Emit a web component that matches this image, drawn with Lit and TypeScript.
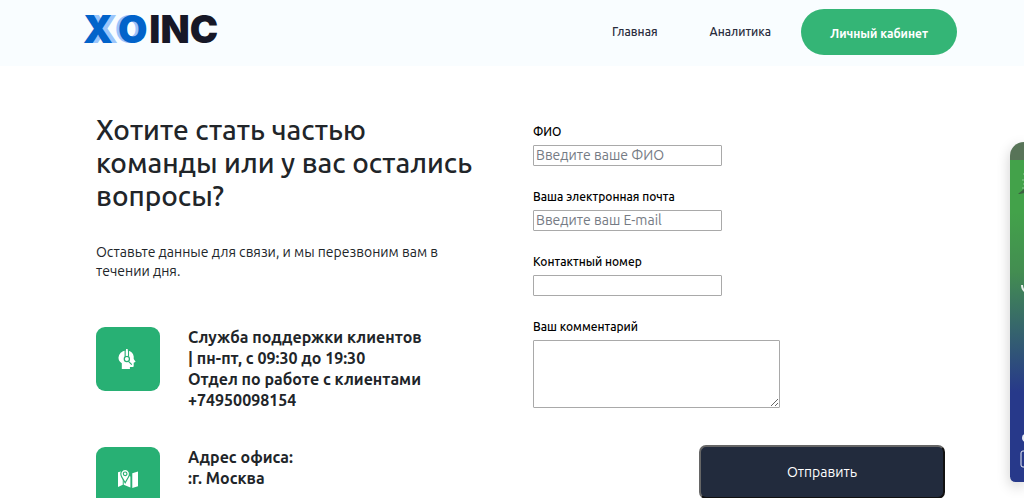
import { LitElement, html, css, svg } from "lit";
import { customElement } from "lit/decorators.js";

const supportIcon = svg`
  <path fill="#fff" d="M4 21v-6C1.500 13.500 .5 11.500 .5 9A8 8 0 0 1 8 1.500h2A7.500 7.500 0 0 1 16.500 8v2.500l2 3-2 1v3c0 1-.5 1.500-1.500 1.500h-2.500V21z"/>
  <path fill="none" stroke="#28b074" stroke-width="1.200" d="M7.500 0v8M11 0v8M11 13l3.500 3.500"/>
  <circle cx="9.300" cy="10.500" r="2.700" fill="#fff" stroke="#28b074" stroke-width="1.300"/>
  <path fill="none" stroke="#fff" stroke-width="1.800" d="M9.300 0v7"/>`;

const mapIcon = svg`
  <path fill="#fff" d="M0 3.500 5 2v14.500L0 19zM6 5l7 3v11.500L6 16.500zM15 4.500l6.500-2v15.500L15 20z"/>
  <path fill="#fff" stroke="#28b074" stroke-width="1.200" d="M7.500 14.500 4 8.500C1.500 4 4 .5 7.500 .5S13.500 4 11 8.500z"/>
  <circle cx="7.500" cy="5" r="1.900" fill="none" stroke="#28b074" stroke-width="1.200"/>`;

@customElement("app-root")
export class AppRoot extends LitElement {
  static styles = css`
    :host {
      display: block;
      background: #fff;
      color: #212529;
      font-family: Ubuntu, "Noto Sans", sans-serif;
      font-size: 14px;
      line-height: 20px;
    }
    * { box-sizing: border-box; }
    .header {
      display: flex;
      justify-content: space-between;
      align-items: flex-start;
      height: 66px;
      padding: 9px 67px 0 83px;
      background: #f9fdff;
    }
    .logo {
      display: flex;
      font: 900 38px/40px Inter, "Liberation Sans", sans-serif;
      color: #171827;
      text-decoration: none;
    }
    .logo-x { color: #0263ca; text-shadow: 5px 0 #9cc5fb; }
    .logo-o { color: #0263ca; text-shadow: -3px 0 #9cc5fb; padding: 0 2px 0 5px; }
    .nav { display: flex; align-items: center; }
    .link {
      margin-right: 52px;
      color: #2b2d3d;
      font-size: 12px;
      font-weight: 500;
      text-decoration: none;
    }
    .link:nth-child(2) { margin-right: 30px; }
    .account {
      padding: 15px 29px 11px;
      border-radius: 23px;
      background: #34b576;
      color: #fff;
      font-size: 12px;
      font-weight: 700;
      text-decoration: none;
    }
    .main {
      display: grid;
      grid-template-columns: 1fr 1fr;
      padding: 47px 54px 48px 96px;
    }
    .title {
      margin: 0;
      font-size: 28px;
      line-height: 33px;
      font-weight: 500;
    }
    .lead {
      margin: 31px 0 46px;
      font-size: 14px;
      line-height: 19px;
    }
    .contact { display: flex; gap: 28px; margin-bottom: 36px; }
    .tile {
      display: grid;
      place-items: center;
      flex: none;
      width: 64px;
      height: 64px;
      border-radius: 9px;
      background: #28b074;
    }
    .icon { width: 20px; height: 20px; }
    .details {
      margin: 0;
      font-size: 16px;
      line-height: 21px;
      font-weight: 600;
    }
    .form { display: flex; flex-direction: column; align-items: flex-start; padding: 9px 25px 0 0; }
    .field { display: flex; flex-direction: column; align-items: flex-start; gap: 3px; margin-bottom: 21px; }
    .field:last-of-type { margin-bottom: 37px; }
    .label { color: #000; font-size: 12px; line-height: 20px; font-weight: 500; }
    .input, .area {
      border: 1px solid #a9a9a9;
      border-radius: 1px;
      background: #fff;
      color: #212529;
      font: 14px/17px Ubuntu, "Noto Sans", sans-serif;
    }
    .input { width: 189px; height: 21px; padding: 0 2px 2px; }
    .input::placeholder { color: #757b84; opacity: 1; }
    .area { width: 247px; height: 68px; padding: 2px; }
    .submit {
      align-self: flex-end;
      width: 246px;
      height: 54px;
      border: 2px outset #666;
      border-radius: 7px;
      background: #222b3d;
      color: #fff;
      font: 14px/20px Ubuntu, "Noto Sans", sans-serif;
    }
    .widget {
      position: fixed;
      top: 142px;
      right: 0;
      width: 14px;
      height: 340px;
      overflow: hidden;
      border-radius: 18px 0 0 7px;
      background: linear-gradient(#587458 18px, #43a24a 18px, #43a24a 70px, #438d51 130px, #27398a 250px);
      box-shadow: 0 4px 14px #0003;
    }
    .widget-art { display: block; width: 14px; height: 340px; }
  `;

  render() {
    return html`
      <header class="header">
        <a class="logo" href="#" aria-label="XOINC"><span class="logo-x">X</span><span class="logo-o">O</span><span>INC</span></a>
        <nav class="nav">
          <a class="link" href="#">Главная</a>
          <a class="link" href="#">Аналитика</a>
          <a class="account" href="#">Личный кабинет</a>
        </nav>
      </header>
      <main class="main">
        <section>
          <h1 class="title">Хотите стать частью<br>команды или у вас остались<br>вопросы?</h1>
          <p class="lead">Оставьте данные для связи, и мы перезвоним вам в<br>течении дня.</p>
          <div class="contact">
            <div class="tile"><svg class="icon" viewBox="0 0 21 21" aria-hidden="true">${supportIcon}</svg></div>
            <p class="details">Служба поддержки клиентов<br>| пн-пт, с 09:30 до 19:30<br>Отдел по работе с клиентами<br>+74950098154</p>
          </div>
          <div class="contact">
            <div class="tile"><svg class="icon" viewBox="0 0 21 21" aria-hidden="true">${mapIcon}</svg></div>
            <p class="details">Адрес офиса:<br>:г. Москва</p>
          </div>
        </section>
        <form class="form">
          <div class="field"><label class="label" for="name">ФИО</label><input class="input" id="name" type="text" placeholder="Введите ваше ФИО"></div>
          <div class="field"><label class="label" for="email">Ваша электронная почта</label><input class="input" id="email" type="email" placeholder="Введите ваш E-mail"></div>
          <div class="field"><label class="label" for="phone">Контактный номер</label><input class="input" id="phone" type="tel"></div>
          <div class="field"><label class="label" for="comment">Ваш комментарий</label><textarea class="area" id="comment"></textarea></div>
          <button class="submit" type="button">Отправить</button>
        </form>
      </main>
      <aside class="widget">
        <svg class="widget-art" viewBox="0 0 14 340" aria-hidden="true">
          <path d="M8 52l6-5v4l-4 1z" fill="#3c6241"/>
          <path d="M13 32h1M12 38h2M13 42h1M12 46h2" stroke="#8cc990"/>
          <path d="M12 143q0 5 4 7" fill="none" stroke="#e8efea" stroke-width="2"/>
          <circle cx="16" cy="296" r="4" fill="#e9ecf5"/>
          <rect x="11" y="309" width="14" height="16" rx="2" fill="none" stroke="#e9ecf5"/>
        </svg>
      </aside>`;
  }
}
